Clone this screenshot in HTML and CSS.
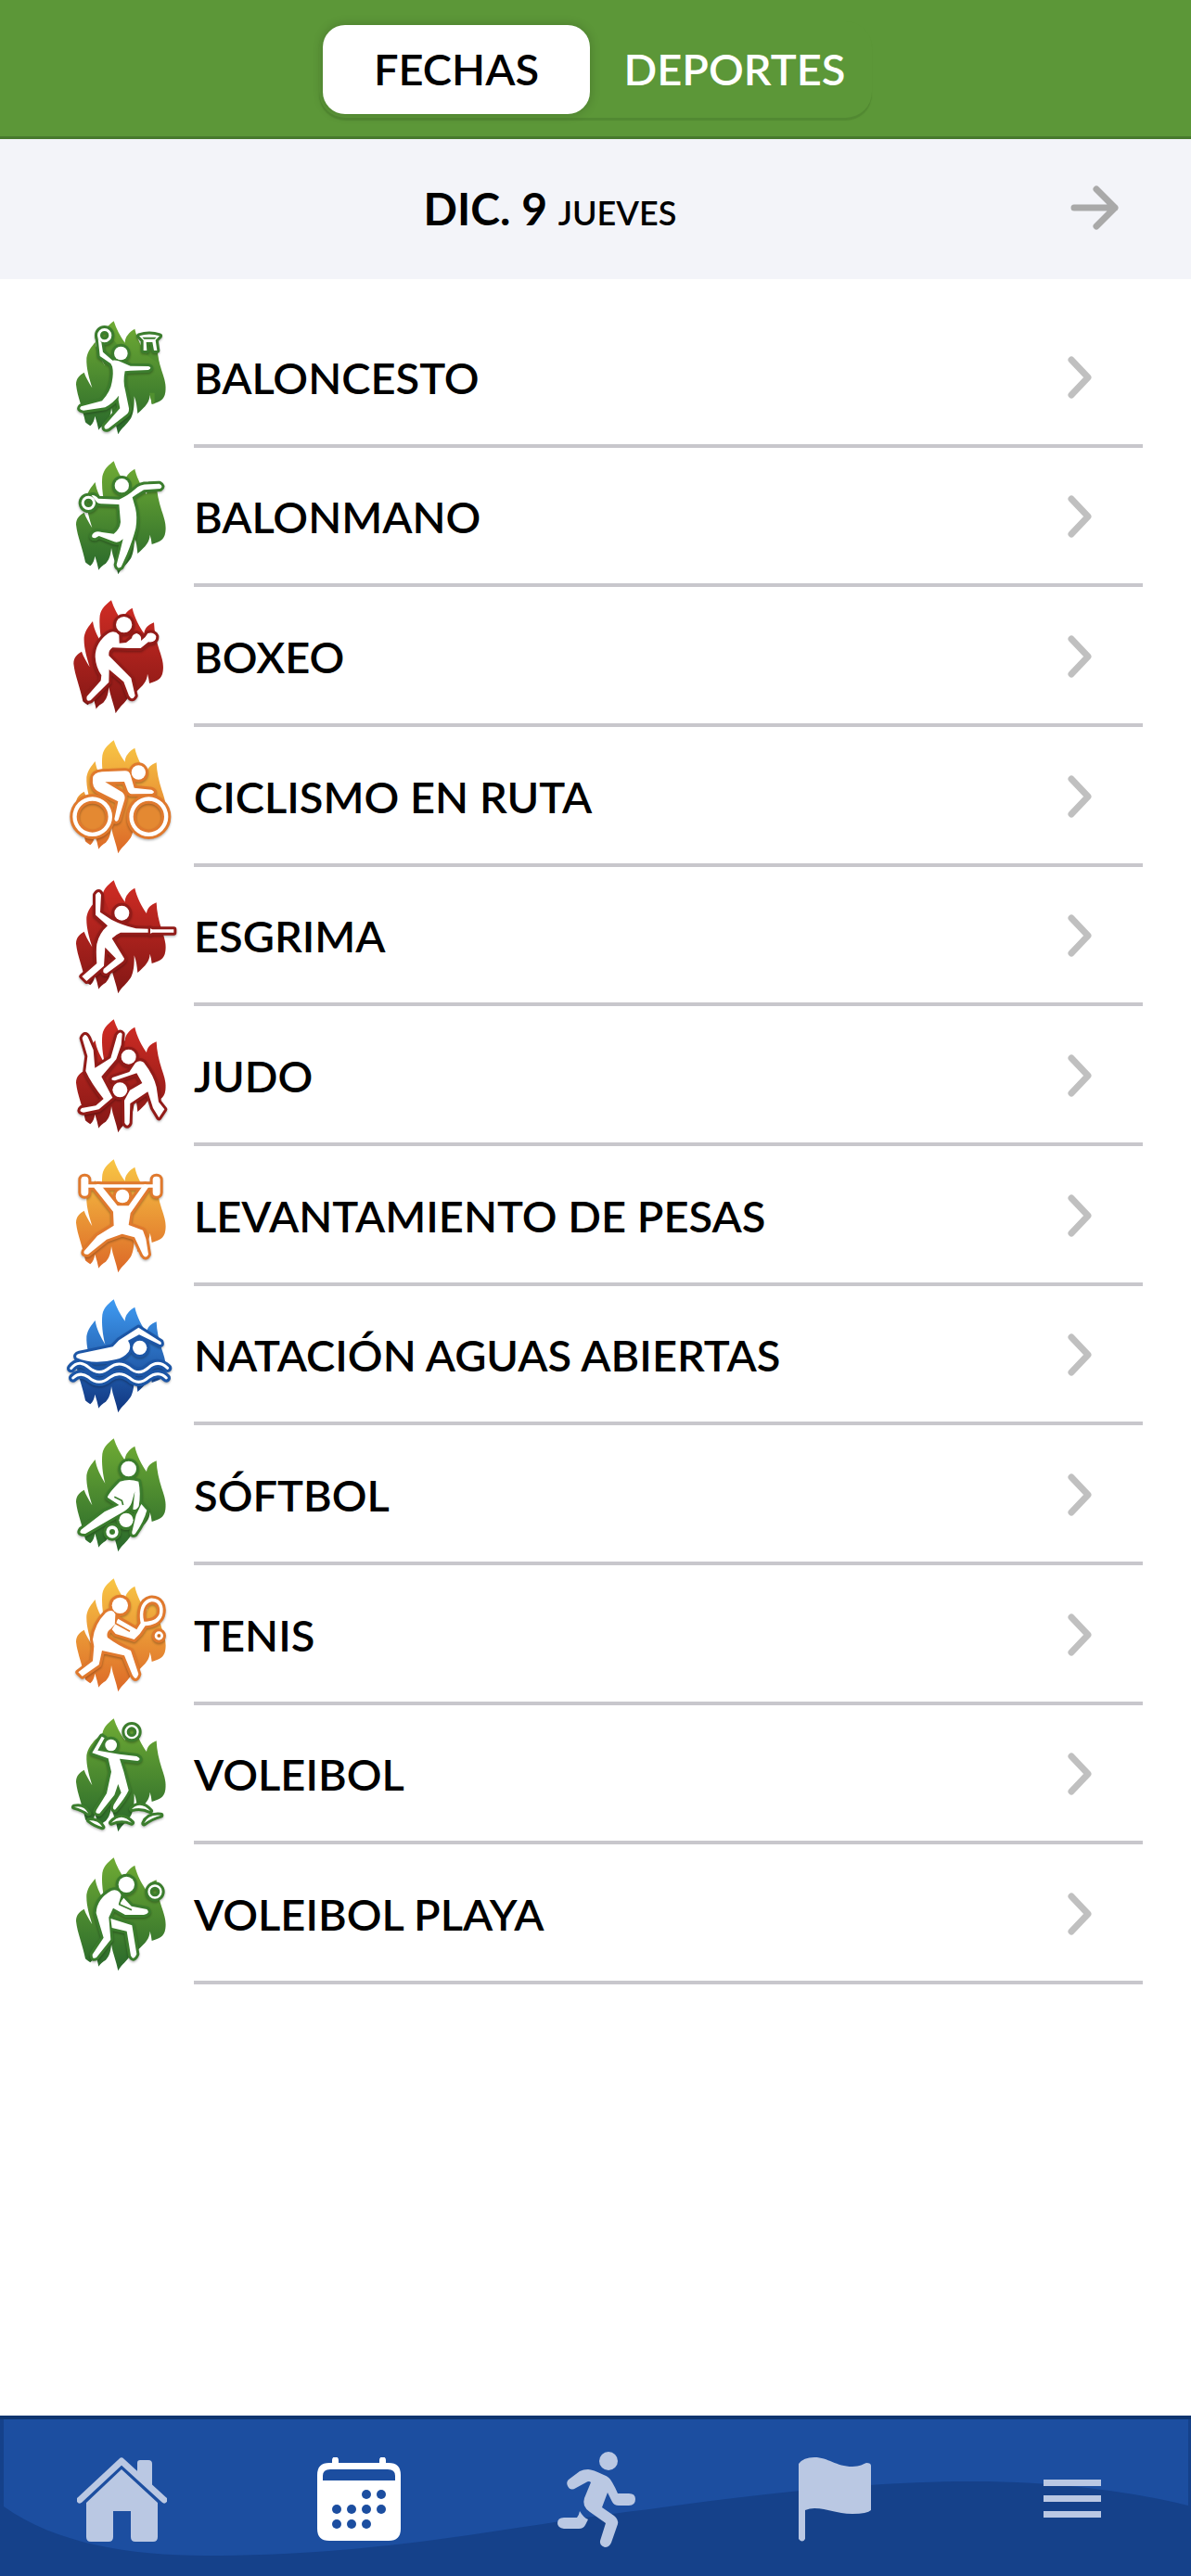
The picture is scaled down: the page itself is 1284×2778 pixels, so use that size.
FILE: index.html
```html
<!DOCTYPE html>
<html lang="es">

<head>
    <meta charset="UTF-8">
    <meta name="viewport" content="width=device-width, initial-scale=1.0">
    <title>Calendario</title>
    <link rel="stylesheet" href="styles.css">
</head>

<body>
    <!-- shared shapes -->
    <svg class="defs" width="0" height="0" aria-hidden="true">
        <defs>
            <linearGradient id="green" x1="0" y1="0" x2="0" y2="1">
                <stop offset="0" stop-color="#6fab34" />
                <stop offset="1" stop-color="#28682b" />
            </linearGradient>
            <linearGradient id="red" x1="0" y1="0" x2="0" y2="1">
                <stop offset="0" stop-color="#d02c24" />
                <stop offset="1" stop-color="#821715" />
            </linearGradient>
            <linearGradient id="orange" x1="0" y1="0" x2="0" y2="1">
                <stop offset="0" stop-color="#f8c645" />
                <stop offset="1" stop-color="#dc6827" />
            </linearGradient>
            <linearGradient id="blue" x1="0" y1="0" x2="0" y2="1">
                <stop offset="0" stop-color="#3f9bf2" />
                <stop offset="1" stop-color="#10357f" />
            </linearGradient>

            <path id="flame" d="M188 43C196 68 209 93 224 113C224 94 238 78 256 68C262 98 280 130 294 150C296 132 308 122 326 115C327 145 334 175 343 203C353 232 358 250 355 272C351 300 336 303 311 312C310 302 308 292 305 281C304 304 292 318 265 342C263 322 261 304 254 286C255 324 250 344 243 358C230 378 214 388 202 409C196 378 184 350 180 324C178 350 172 364 162 374C152 380 144 386 139 395C136 380 132 365 127 350C125 364 121 374 112 382C106 378 100 374 96 370C88 326 70 286 66 248C66 226 80 216 92 209C98 226 108 242 118 259C110 232 98 196 100 162C104 138 116 126 128 111C132 140 146 164 160 188C152 158 148 120 151 92C156 68 172 56 188 43Z" />

            <g id="baloncesto">
                <circle cx="211" cy="147" r="22" />
                <path fill-rule="evenodd" d="M135 89a23 23 0 1 0 46 0a23 23 0 1 0 -46 0ZM144 89a14 14 0 1 1 28 0a14 14 0 1 1 -28 0Z" />
                <path d="M137 98L148 112L153 143L184 170Q192 168 204 172L242 188L300 189Q314 194 300 201L242 203L224 205Q217 240 225 266L237 325Q238 340 228 346L170 391Q155 396 158 382L208 325L203 298L204 284Q188 306 160 322L90 332Q72 329 82 319L150 301Q178 270 182 240Q188 210 183 190L178 180L143 156Z" />
                <path fill-rule="evenodd" d="M270 91Q303 80 336 91L323 104L328 138L318 138L313 111H293L295 138L284 138L284 105ZM280 95H326L320 101H286Z" />
            </g>
            <g id="balonmano">
                <circle cx="214" cy="122" r="23" />
                <path fill-rule="evenodd" d="M83 178a23 23 0 1 0 46 0a23 23 0 1 0 -46 0ZM92 178a14 14 0 1 1 28 0a14 14 0 1 1 -28 0Z" />
                <path d="M116 154Q125 150 138 164L205 167Q232 156 258 133Q272 118 300 118L335 116Q350 124 338 132L285 136Q262 150 248 160L258 195Q265 225 259 260Q250 296 230 345L212 385Q200 394 197 378L208 335L218 295Q205 308 190 304L140 285L128 292Q113 292 119 280Q128 266 150 273L188 278Q208 262 210 240L205 183L150 181Q136 182 130 172Z" />
            </g>
            <g id="boxeo">
                <circle cx="221" cy="122" r="26" />
                <path d="M205 155Q190 138 170 150Q128 180 128 226Q130 260 148 286L146 303L101 354Q97 372 113 367L172 308L173 267L220 307L237 352Q247 370 257 352L244 295L172 222Q170 205 184 196L235 198L275 198L300 178Q326 180 325 160Q318 145 298 150Q292 163 276 174Q280 156 262 150Q248 153 246 166L228 180L206 182Z" />
            </g>
            <g id="ciclismo">
                <path fill-rule="evenodd" d="M55 290a64 64 0 1 0 128 0a64 64 0 1 0 -128 0ZM68 290a51 51 0 1 1 102 0a51 51 0 1 1 -102 0Z" />
                <path fill-rule="evenodd" d="M238 290a63 64 0 1 0 126 0a63 64 0 1 0 -126 0ZM251 290a50 51 0 1 1 100 0a50 51 0 1 1 -100 0Z" />
                <circle cx="268" cy="147" r="23" />
                <path d="M120 166Q122 148 150 145L225 142Q238 142 242 155L254 197L310 203Q325 210 312 216L246 217Q236 216 232 204L222 177L160 178L215 211Q226 220 223 235L203 300Q194 312 190 298L202 241L135 207Q117 195 120 166Z" />
            </g>
            <g id="esgrima">
                <circle cx="214" cy="149" r="24" />
                <path d="M129 90Q140 72 147 90L144 146L180 170Q215 188 260 199L299 200V212L210 212Q195 218 182 231L222 296Q223 302 212 310L165 344Q150 346 155 330L195 296L160 260L156 320L100 369L85 354L133 312Q130 270 133 250Q140 215 168 190L129 155Z" />
                <path d="M306 199L313 202H382V212H313L306 215Z" />
            </g>
            <g id="judo">
                <circle cx="236" cy="164" r="24" />
                <circle cx="208" cy="271" r="24" />
                <path d="M86 104Q95 82 106 104L122 142L127 200L178 168L199 94Q208 80 215 90L212 125L196 172L148 228L184 296L140 334L90 344Q72 341 84 330L130 322L155 300Q115 250 97 210L103 162Z" />
                <path d="M258 184Q272 172 285 182Q318 225 326 262L333 310L352 334L334 361L315 330L298 277L241 315L239 378Q232 394 223 378L222 305L240 272L280 249L262 217L192 241Q175 240 184 231L238 213Z" />
            </g>
            <g id="pesas">
                <circle cx="216" cy="162" r="22" />
                <rect x="82" y="98" width="24" height="63" rx="11" />
                <rect x="314" y="98" width="24" height="63" rx="11" />
                <path d="M104 124H316V134H104Z" />
                <path d="M124 134Q134 116 148 128L200 193H236L282 128Q292 118 301 132L242 217L236 255L282 272L292 300L300 350Q292 366 282 352L255 295L215 284L165 302L105 350Q88 352 92 340L135 290L188 257L186 212Z" />
            </g>
            <g id="natacion">
                <circle cx="272" cy="199" r="23" />
                <path d="M68 232Q62 222 77 218L185 196L205 175L268 134L340 180Q345 192 335 188L270 157L234 176Q246 194 236 212Q220 232 195 237Q120 256 68 232Z" />
            </g>
            <path id="waves" d="M50 266C70 240 92 250 107 263Q140 292 174 264Q205 240 238 264Q268 292 300 264C322 244 344 248 362 265M56 297C74 280 92 284 107 295Q140 324 174 296Q205 272 238 296Q268 324 300 296C322 278 344 282 358 297" />
            <g id="softbol">
                <circle cx="236" cy="141" r="25" />
                <path d="M208 182Q238 172 268 182Q276 220 269 262Q262 276 250 272L256 214L246 250Q240 268 222 278L96 351Q72 352 82 338L158 280L205 258L168 234Q165 226 208 182Z" />
                <circle cx="228" cy="307" r="23" />
                <path d="M277 255L295 275Q285 312 257 352Q246 358 247 345L260 290Z" />
                <path fill-rule="evenodd" d="M163 345a20 20 0 1 0 40 0a20 20 0 1 0 -40 0ZM174 345a9 9 0 1 1 18 0a9 9 0 1 1 -18 0Z" />
            </g>
            <g id="tenis">
                <circle cx="208" cy="130" r="26" />
                <path d="M194 160Q184 138 162 154Q126 190 120 240L124 262L120 310L73 346L86 359L140 322L150 276L222 292L248 355Q260 378 268 352L243 276Q205 262 168 234Q162 216 178 206L194 188Z" />
                <path fill-rule="evenodd" d="M202 173L262 208L275 187C268 150 276 114 306 107C340 104 353 132 345 162C337 186 314 194 290 196L272 222L254 240L194 222L182 208ZM286 182C277 148 289 122 311 118C332 118 340 136 335 158C327 176 309 182 286 182Z" />
                <path fill-rule="evenodd" d="M320 228a14 14 0 1 0 28 0a14 14 0 1 0 -28 0ZM328 228a6 6 0 1 1 12 0a6 6 0 1 1 -12 0Z" />
            </g>
            <g id="voleibol">
                <circle cx="179" cy="129" r="19" />
                <path fill-rule="evenodd" d="M223 86a23 23 0 1 0 46 0a23 23 0 1 0 -46 0ZM230 86a16 16 0 1 1 32 0a16 16 0 1 1 -32 0Z" />
                <path d="M149 101L158 106L136 146L205 158L262 165Q280 174 265 180L207 173L220 214L236 275Q225 300 192 338Q182 338 188 322L212 283L202 255L190 290L142 350Q125 352 132 338L165 285L180 215L170 172L118 154Z" />
                <path d="M246 336Q275 308 306 342Q278 328 246 336ZM180 380Q212 344 246 380Q215 366 180 380ZM60 329Q92 322 106 350Q88 336 60 329ZM108 372Q140 372 151 394Q128 388 108 372ZM286 382Q298 352 340 356Q310 364 286 382Z" />
            </g>
            <g id="playa">
                <circle cx="229" cy="130" r="26" />
                <path fill-rule="evenodd" d="M298 153a23 23 0 1 0 46 0a23 23 0 1 0 -46 0ZM305 153a16 16 0 1 1 32 0a16 16 0 1 1 -32 0Z" />
                <path d="M213 168Q205 142 180 150Q133 176 131 222L155 302L119 356Q118 374 132 366L178 308L172 236L186 206L225 228L285 228Q308 222 295 210L245 200L220 173L205 194Z" />
                <path d="M178 240L247 262L262 355Q252 378 243 360L230 281L182 270Z" />
            </g>

            <symbol id="chevron" viewBox="0 0 26 46">
                <path d="M4 4L22 23L4 42" fill="none" stroke="#c0c0c0" stroke-width="7" stroke-linecap="round" stroke-linejoin="round" />
            </symbol>
        </defs>
    </svg>

    <header class="head">
        <div class="tabs">
            <button class="tab active" type="button">FECHAS</button>
            <button class="tab" type="button">DEPORTES</button>
        </div>
    </header>

    <div class="date-bar">
        <h1 class="date">DIC. 9 <span class="day">JUEVES</span></h1>
        <button class="next" type="button" aria-label="Siguiente">
            <svg width="52" height="48" viewBox="0 0 52 48" fill="none" stroke="#a9a9a9" stroke-width="7" stroke-linecap="round" stroke-linejoin="round">
                <path d="M4 24H48M28 4L48 24L28 44" />
            </svg>
        </button>
    </div>

    <main class="sports">
        <a class="sport green" href="#baloncesto">
            <svg class="icon" viewBox="30 0 360 450"><use class="flame" href="#flame" /><path class="backing" d="M128 130L164 196L200 120L170 80ZM284 95H328V140H284ZM290 150L326 115L334 180ZM303 275H320V310H311Z" /><use class="halo" href="#baloncesto" /><use class="figure" href="#baloncesto" /></svg>
            <span class="row">BALONCESTO <svg class="chevron"><use href="#chevron" /></svg></span>
        </a>
        <a class="sport green" href="#balonmano">
            <svg class="icon" viewBox="30 0 360 450"><use class="flame" href="#flame" /><use class="halo" href="#balonmano" /><use class="figure" href="#balonmano" /></svg>
            <span class="row">BALONMANO <svg class="chevron"><use href="#chevron" /></svg></span>
        </a>
        <a class="sport red" href="#boxeo">
            <svg class="icon" viewBox="30 0 360 450"><use class="flame" href="#flame" x="-8" /><use class="halo" href="#boxeo" /><use class="figure" href="#boxeo" /></svg>
            <span class="row">BOXEO <svg class="chevron"><use href="#chevron" /></svg></span>
        </a>
        <a class="sport orange" href="#ciclismo">
            <svg class="icon" viewBox="30 0 360 450"><use class="flame" href="#flame" /><path class="backing" d="M64 290a55 55 0 1 0 110 0a55 55 0 1 0 -110 0ZM246 290a55 55 0 1 0 110 0a55 55 0 1 0 -110 0Z" /><use class="halo" href="#ciclismo" /><use class="figure" href="#ciclismo" /></svg>
            <span class="row">CICLISMO EN RUTA <svg class="chevron"><use href="#chevron" /></svg></span>
        </a>
        <a class="sport red" href="#esgrima">
            <svg class="icon" viewBox="30 0 360 450"><use class="flame" href="#flame" /><path class="backing" d="M140 90L152 88L176 150L164 196L128 150Z" /><use class="halo" href="#esgrima" /><use class="figure" href="#esgrima" /></svg>
            <span class="row">ESGRIMA <svg class="chevron"><use href="#chevron" /></svg></span>
        </a>
        <a class="sport red" href="#judo">
            <svg class="icon" viewBox="30 0 360 450"><use class="flame" href="#flame" /><use class="halo" href="#judo" /><use class="figure" href="#judo" /></svg>
            <span class="row">JUDO <svg class="chevron"><use href="#chevron" /></svg></span>
        </a>
        <a class="sport orange" href="#pesas">
            <svg class="icon" viewBox="30 0 360 450"><use class="flame" href="#flame" /><use class="halo" href="#pesas" /><use class="figure" href="#pesas" /></svg>
            <span class="row">LEVANTAMIENTO DE PESAS <svg class="chevron"><use href="#chevron" /></svg></span>
        </a>
        <a class="sport blue" href="#natacion">
            <svg class="icon" viewBox="30 0 360 450"><use class="flame" href="#flame" /><use class="halo" href="#natacion" /><use class="wave-halo" href="#waves" /><use class="figure" href="#natacion" /><use class="wave-line" href="#waves" /></svg>
            <span class="row">NATACIÓN AGUAS ABIERTAS <svg class="chevron"><use href="#chevron" /></svg></span>
        </a>
        <a class="sport green" href="#softbol">
            <svg class="icon" viewBox="30 0 360 450"><use class="flame" href="#flame" /><use class="halo" href="#softbol" /><use class="figure" href="#softbol" /><path class="crease" d="M190 232L214 244L218 258" /></svg>
            <span class="row">SÓFTBOL <svg class="chevron"><use href="#chevron" /></svg></span>
        </a>
        <a class="sport orange" href="#tenis">
            <svg class="icon" viewBox="30 0 360 450"><use class="flame" href="#flame" /><use class="halo" href="#tenis" /><use class="figure" href="#tenis" /><path class="crease" d="M196 160L194 188L240 214" /></svg>
            <span class="row">TENIS <svg class="chevron"><use href="#chevron" /></svg></span>
        </a>
        <a class="sport green" href="#voleibol">
            <svg class="icon" viewBox="30 0 360 450"><use class="flame" href="#flame" /><path class="backing" d="M128 112L152 90L186 130L164 196L128 150Z" /><use class="halo" href="#voleibol" /><use class="figure" href="#voleibol" /></svg>
            <span class="row">VOLEIBOL <svg class="chevron"><use href="#chevron" /></svg></span>
        </a>
        <a class="sport green" href="#playa">
            <svg class="icon" viewBox="30 0 360 450"><use class="flame" href="#flame" /><use class="halo" href="#playa" /><use class="figure" href="#playa" /><path class="crease" d="M214 166L206 194L246 212" /></svg>
            <span class="row">VOLEIBOL PLAYA <svg class="chevron"><use href="#chevron" /></svg></span>
        </a>
    </main>

    <nav class="menu">
        <svg class="menu-wave" viewBox="0 0 1284 169" preserveAspectRatio="none" aria-hidden="true">
            <path d="M0 0H4V94C60 134 140 147 221 147C420 147 560 113 700 97C820 80 940 67 1048 67C1140 67 1220 78 1281 93V0H1284V169H0Z" />
        </svg>
        <a class="menu-item" href="#inicio" aria-label="Inicio">
            <svg width="97" height="91" viewBox="0 0 97 91">
                <path d="M3 46L48 4L94 46" fill="none" stroke="currentColor" stroke-width="7" stroke-linecap="round" stroke-linejoin="round" />
                <path d="M68 3h9q4 0 4 4v25L65 17V6q0-3 3-3Z" />
                <path d="M48 13L87 49V86Q87 91 82 91H63Q58 91 58 86V58H39V86Q39 91 34 91H15Q10 91 10 86V49Z" />
            </svg>
        </a>
        <a class="menu-item active" href="#fechas" aria-label="Fechas">
            <svg width="90" height="90" viewBox="0 0 90 90">
                <path fill-rule="evenodd" d="M16 6V3a3 3 0 0 1 7 0V6H67V3a3 3 0 0 1 7 0V6H77Q90 6 90 19V77Q90 90 77 90H13Q0 90 0 77V19Q0 6 13 6ZM14 13Q6 13 6 20V25H84V20Q84 13 76 13Z" />
                <g fill="#1c4ea0">
                    <circle cx="53" cy="40" r="5" /><circle cx="69" cy="40" r="5" />
                    <circle cx="21" cy="56" r="5" /><circle cx="37" cy="56" r="5" /><circle cx="53" cy="56" r="5" /><circle cx="69" cy="56" r="5" />
                    <circle cx="21" cy="72" r="5" /><circle cx="37" cy="72" r="5" /><circle cx="53" cy="72" r="5" />
                </g>
            </svg>
        </a>
        <a class="menu-item" href="#deportes" aria-label="Deportes">
            <svg width="85" height="103" viewBox="0 0 85 103">
                <circle cx="55" cy="10" r="10" />
                <path d="M33 19Q38 19 50 25Q56 27 59 33Q62 38 65 45H77Q84 45 84 51Q84 58 77 58H66Q61 58 59 54L54 44L48 60L61 69Q66 73 65 78L58 98Q56 103 51 103Q45 101 46 96L52 77L35 65Q26 59 29 50L36 33Q34 31 31 33L20 39Q14 43 11 37Q9 33 12 30L24 21Q28 19 33 19Z" />
                <path d="M24 64Q28 71 33 73L30 79Q28 83 23 83H7Q0 82 0 77Q0 71 7 71H21Q23 69 24 64Z" />
            </svg>
        </a>
        <a class="menu-item" href="#paises" aria-label="Países">
            <svg width="78" height="91" viewBox="0 0 78 91">
                <path d="M0 7Q5 0 17 0C32 0 40 10 58 10C66 10 70 7 73 6Q78 6 78 9V57Q74 61 58 61C40 61 32 55 17 55Q12 55 7 57V88Q4 93 0 88Z" />
            </svg>
        </a>
        <a class="menu-item" href="#mas" aria-label="Más">
            <svg width="62" height="42" viewBox="0 0 62 42">
                <path d="M0 0H62V7H0ZM0 17H62V24H0ZM0 34H62V41H0Z" />
            </svg>
        </a>
    </nav>
</body>

</html>
```
FILE: styles.css
```css
* {
    box-sizing: border-box;
    margin: 0;
    padding: 0;
}

body {
    display: flex;
    flex-direction: column;
    min-height: 100vh;
    background: #fff;
    color: #000;
    font-family: Lato, "Open Sans", sans-serif;
    font-size: 47px;
    font-weight: 600;
}

button {
    font: inherit;
    border: none;
    background: none;
}

a {
    color: inherit;
    text-decoration: none;
}

.defs {
    position: absolute;
}

/* tabs */
.head {
    display: flex;
    justify-content: center;
    padding: 23px 0 20px;
    background: #5c9738;
    border-bottom: 3px solid #47792d;
}

.tabs {
    display: flex;
    gap: 12px;
    padding: 4px;
    border-radius: 28px;
    box-shadow: 0 3px 1px #528932;
    background: #5c9738;
}

.tab {
    width: 288px;
    height: 96px;
    padding-bottom: 2px;
    border-radius: 24px;
    color: #fff;
}

.tab.active {
    background: #fff;
    color: #000;
    box-shadow: 0 0 12px rgba(0, 0, 0, 0.2);
}

/* date */
.date-bar {
    display: grid;
    grid-template-columns: 96px 1fr 194px;
    align-items: center;
    height: 151px;
    padding-bottom: 3px;
    background: #f3f4f9;
}

.date {
    grid-column: 2;
    text-align: center;
    font-size: 48px;
    font-weight: 700;
}

.day {
    font-size: 36px;
    font-weight: 600;
}

.next {
    display: flex;
    justify-content: flex-end;
    padding-right: 78px;
}

/* list */
.sports {
    display: grid;
    grid-auto-rows: 1fr;
    min-height: 1839px;
    padding: 31px 52px 0 70px;
}

.sport {
    display: flex;
    gap: 19px;
}

.icon {
    width: 120px;
    height: 150px;
    overflow: visible;
}

.row {
    flex: 1;
    display: flex;
    align-items: center;
    justify-content: space-between;
    padding: 3px 55px 0 0;
    border-bottom: 4px solid #c8c7cc;
}

.chevron {
    width: 26px;
    height: 46px;
}

.green {
    --flame: url(#green);
    --mid: #50902f;
    --edge: #3b7d2d;
}

.red {
    --flame: url(#red);
    --mid: #b3241f;
    --edge: #921b18;
}

.orange {
    --flame: url(#orange);
    --mid: #e48932;
    --edge: #e0792d;
}

.blue {
    --flame: url(#blue);
    --edge: #1c56a6;
}

.flame {
    fill: var(--flame);
}

.backing {
    fill: var(--mid);
}

.halo {
    fill: var(--edge);
    stroke: var(--edge);
    stroke-width: 18px;
    stroke-linejoin: round;
    filter: drop-shadow(0 4px 3px rgba(0, 0, 0, 0.3));
}

.figure {
    fill: #fff;
}

.crease {
    fill: none;
    stroke: var(--edge);
    stroke-width: 5px;
    stroke-linejoin: round;
}

.wave-halo,
.wave-line {
    fill: none;
    stroke: var(--edge);
    stroke-width: 28px;
    stroke-linecap: round;
}

.wave-halo {
    filter: drop-shadow(0 4px 3px rgba(0, 0, 0, 0.3));
}

.wave-line {
    stroke: #fff;
    stroke-width: 9px;
}

/* bottom menu */
.menu {
    position: relative;
    display: flex;
    height: 173px;
    margin-top: auto;
    padding: 3px 0 0 3px;
    background: #1c4ea0;
    border-top: 4px solid #0e356f;
}

.menu-wave {
    position: absolute;
    top: 0;
    left: 0;
    width: 100%;
    height: 100%;
    fill: #15418a;
}

.menu-item {
    position: relative;
    flex: 1;
    display: flex;
    align-items: center;
    justify-content: center;
    color: #bac8e3;
    fill: currentColor;
}

.menu-item.active {
    color: #fff;
}
```
